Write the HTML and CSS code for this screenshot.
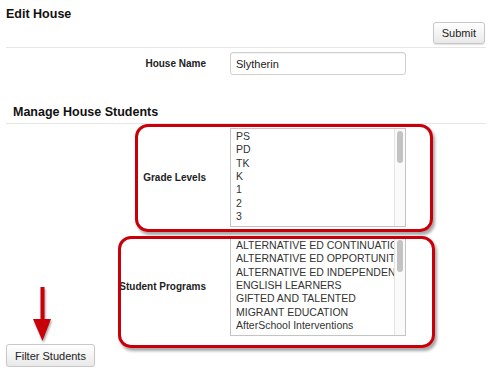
FILE: index.html
```html
<!DOCTYPE html>
<html>
<head>
    <meta charset="utf-8">
    <meta name="viewport" content="width=device-width, initial-scale=1">
    <title>Edit House</title>

    <link rel="stylesheet" href="styles.css">
</head>
<body>
<div class="page">
    <div class="title">Edit House</div>
    <div class="actions">
        <button class="btn">Submit</button>
    </div>

    <div class="row house">
        <label>House Name</label>
        <input type="text" class="text" value="Slytherin">
    </div>

    <div class="section">Manage House Students</div>

    <div class="row list-row">
        <label>Grade Levels</label>
        <div class="listbox">
            <div class="options">
                <div>PS</div>
                <div>PD</div>
                <div>TK</div>
                <div>K</div>
                <div>1</div>
                <div>2</div>
                <div>3</div>
            </div>
            <div class="scrollbar"><div class="thumb"></div></div>
        </div>
        <div class="callout grade"></div>
    </div>

    <div class="row list-row programs">
        <label>Student Programs</label>
        <div class="listbox">
            <div class="options">
                <div>ALTERNATIVE ED CONTINUATION</div>
                <div>ALTERNATIVE ED OPPORTUNITY</div>
                <div>ALTERNATIVE ED INDEPENDENT STUDY</div>
                <div>ENGLISH LEARNERS</div>
                <div>GIFTED AND TALENTED</div>
                <div>MIGRANT EDUCATION</div>
                <div>AfterSchool Interventions</div>
            </div>
            <div class="scrollbar"><div class="thumb"></div></div>
        </div>
        <div class="callout student"></div>
    </div>

    <div class="filter">
        <svg class="arrow" width="24" height="58" viewBox="0 0 24 58">
            <rect x="8.5" y="0" width="4" height="36" fill="#c8000a"/>
            <polygon points="1,32 19,32 10.5,54" fill="#c8000a"/>
        </svg>
        <button class="btn">Filter Students</button>
    </div>
</div>
</body>
</html>
```

FILE: styles.css
```css
body {
    margin: 0;
    background: #fff;
    font-family: "Liberation Sans", Arial, sans-serif;
    color: #222;
}

.page {
    width: 480px;
    margin-left: 6px;
}

.title {
    padding-top: 7px;
    font-size: 12.5px;
    line-height: 15px;
    font-weight: bold;
    color: #111;
}

.actions {
    display: flex;
    justify-content: flex-end;
    padding-bottom: 3px;
    padding-right: 1px;
    border-bottom: 1px solid #e6e6e6;
}

.btn {
    height: 22px;
    padding: 0 8px;
    font-family: "Liberation Sans", Arial, sans-serif;
    font-size: 11px;
    color: #222;
    background: linear-gradient(#ffffff, #e9e9e9);
    border: 1px solid #c8c8c8;
    border-radius: 3px;
    box-shadow: 0 1px 1px rgba(0, 0, 0, 0.12);
}

.row {
    display: flex;
    align-items: center;
    position: relative;
}

.row label {
    width: 200px;
    margin-right: 24px;
    text-align: right;
    font-size: 10px;
    font-weight: bold;
    color: #222;
}

.house {
    margin-top: 4px;
}

.text {
    box-sizing: border-box;
    width: 176px;
    height: 23px;
    padding: 0 5px;
    font-family: "Liberation Sans", Arial, sans-serif;
    font-size: 11px;
    color: #222;
    border: 1px solid #d0d0d0;
    border-radius: 3px;
    box-shadow: inset 0 1px 1px rgba(0, 0, 0, 0.06);
}

.section {
    margin-top: 29px;
    padding-left: 7px;
    padding-bottom: 3px;
    font-size: 12.5px;
    line-height: 16px;
    font-weight: bold;
    color: #111;
    border-bottom: 1px solid #e6e6e6;
}

.list-row {
    margin-top: 4px;
}

.programs {
    margin-top: 10px;
}

.listbox {
    box-sizing: border-box;
    display: flex;
    width: 176px;
    height: 99px;
    border: 1px solid #c4c4c4;
    background: #fff;
}

.options {
    flex: 1;
    overflow: hidden;
    white-space: nowrap;
    padding: 1px 0 0 5px;
    font-size: 10.5px;
    line-height: 13.33px;
    color: #333;
}

.scrollbar {
    width: 8px;
    padding: 2px 1px;
    border-left: 1px solid #e4e4e4;
    background: #fafafa;
}

.thumb {
    width: 6px;
    height: 32px;
    margin-left: 1px;
    border-radius: 3px;
    background: #c3c3c3;
}

.callout {
    position: absolute;
    box-sizing: border-box;
    border: 3px solid #c8000a;
    border-radius: 13px;
    box-shadow: 2px 3px 3px rgba(0, 0, 0, 0.35);
}

.callout.grade {
    left: 129px;
    top: -4px;
    width: 298px;
    height: 108px;
}

.callout.student {
    left: 112px;
    top: -1px;
    width: 317px;
    height: 112px;
}

.filter {
    position: relative;
    margin-top: 8px;
}

.filter .btn {
    height: 23px;
    padding: 0 8px;
}

.arrow {
    position: absolute;
    left: 26px;
    top: -57px;
    filter: drop-shadow(1px 2px 1px rgba(0, 0, 0, 0.35));
}
```
